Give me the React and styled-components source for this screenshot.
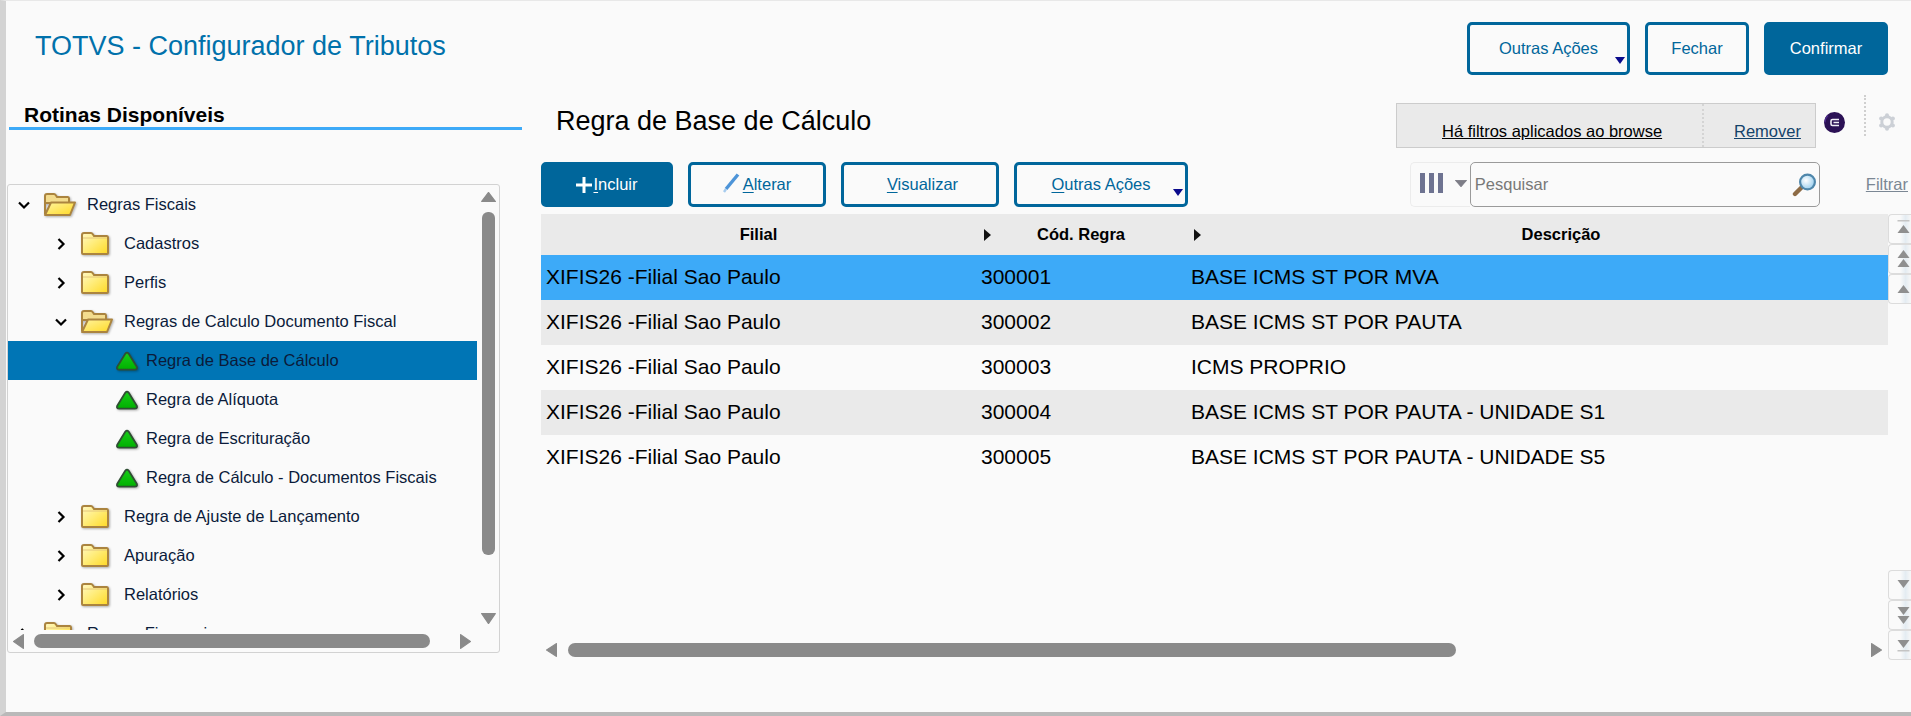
import React from 'react';
import styled, { createGlobalStyle } from 'styled-components';

const BLUE = '#00669b';

const GlobalStyle = createGlobalStyle`
    html, body {
        margin: 0;
        height: 100%;
        overflow: hidden;
        background: #fafafa;
    }
    * {
        box-sizing: border-box;
    }
`;

const Shell = styled.div`
    width: 1911px;
    height: 716px;
    overflow: hidden;
    background: #fafafa;
    border-left: 6px solid #d3d3d3;
    border-top: 1px solid #e8e8e8;
    border-bottom: 4px solid #b9b9b9;
    font-family: "Liberation Sans", Arial, sans-serif;
    font-size: 16.5px;
`;

const Header = styled.header`
    display: flex;
    justify-content: space-between;
    height: 89px;
    padding: 21px 23px 0 29px;
`;

const AppTitle = styled.h1`
    margin: 0;
    padding-top: 1px;
    font-size: 27px;
    font-weight: 400;
    line-height: 46px;
    color: #0071ab;
`;

const ButtonRow = styled.div`
    display: flex;
    gap: 15px;
`;

const Button = styled.button`
    position: relative;
    width: ${(p) => p.$w}px;
    height: ${(p) => p.$h || 45}px;
    padding: 0 0 0 ${(p) => p.$shift || 0}px;
    border: 3px solid ${BLUE};
    border-radius: 5px;
    background: ${(p) => (p.$primary ? BLUE : '#fafafa')};
    color: ${(p) => (p.$primary ? '#fff' : BLUE)};
    font: inherit;
    display: flex;
    align-items: center;
    justify-content: center;
    u {
        text-underline-offset: 2px;
    }
`;

const Caret = styled.span`
    position: absolute;
    right: 2px;
    bottom: 8px;
    width: 0;
    height: 0;
    border-left: 5px solid transparent;
    border-right: 5px solid transparent;
    border-top: 7px solid #0a0a8c;
`;

const Body = styled.div`
    display: grid;
    grid-template-columns: 535px 1370px;
`;

const Sidebar = styled.aside`
    display: flex;
    flex-direction: column;
`;

const SideTitle = styled.h2`
    box-sizing: content-box;
    margin: 13px 0 0 3px;
    width: 498px;
    height: 24px;
    padding-left: 15px;
    border-bottom: 3px solid #3daaf8;
    font-size: 21px;
    line-height: 24px;
    font-weight: 700;
    color: #000;
`;

const TreePanel = styled.div`
    display: grid;
    grid-template-columns: 469px 22px;
    grid-template-rows: 445px 22px;
    margin: 54px 0 0 1px;
    width: 493px;
    height: 469px;
    border: 1px solid #d2d2d2;
    border-radius: 3px;
`;

const TreeList = styled.ul`
    margin: 0;
    padding: 0;
    list-style: none;
    overflow: hidden;
`;

const TreeRow = styled.li`
    display: flex;
    align-items: center;
    height: 39px;
    padding-left: ${(p) => p.$indent}px;
    background: ${(p) => (p.$selected ? '#0075b5' : 'transparent')};
    color: #0b1b3a;
`;

const ChevronSlot = styled.span`
    display: flex;
    align-items: center;
    justify-content: center;
    width: 32px;
    margin-right: 4px;
`;

const IconSlot = styled.span`
    display: flex;
    align-items: center;
    width: ${(p) => p.$w}px;
    margin-right: ${(p) => p.$gap}px;
    filter: drop-shadow(1px 1px 1px rgba(0, 0, 0, 0.3));
`;

const VScroll = styled.div`
    display: flex;
    flex-direction: column;
    align-items: center;
    padding: 7px 0 6px;
    height: 445px;
`;

const VThumb = styled.div`
    width: 13px;
    height: 343px;
    margin: 10px 0 auto;
    border-radius: 6px;
    background: #8a8a8a;
`;

const HBar = styled.div`
    grid-column: 1 / 3;
    display: flex;
    align-items: center;
    padding: ${(p) => p.$pad};
`;

const HThumb = styled.div`
    width: ${(p) => p.$w}px;
    height: 14px;
    margin: 0 auto 0 ${(p) => p.$gap}px;
    border-radius: 7px;
    background: #8a8a8a;
`;

const Main = styled.main`
    display: flex;
    flex-direction: column;
`;

const TitleRow = styled.div`
    display: flex;
    justify-content: space-between;
    height: 72px;
`;

const PageTitle = styled.h2`
    margin: 0;
    padding-left: 15px;
    font-size: 27px;
    font-weight: 400;
    line-height: 62px;
    color: #000;
`;

const TitleTools = styled.div`
    display: flex;
    align-items: flex-start;
    padding-right: 15px;
`;

const FilterBox = styled.div`
    display: flex;
    width: 420px;
    height: 45px;
    margin-top: 13px;
    background: #eaeaea;
    border: 1px solid #cccccc;
`;

const FilterText = styled.span`
    width: 307px;
    padding: 17px 0 0 45px;
    color: #000;
    line-height: 20px;
    text-decoration: underline;
    white-space: nowrap;
    border-right: 2px dotted #d4d4d4;
`;

const FilterAction = styled.span`
    padding: 17px 0 0 30px;
    color: #14436b;
    line-height: 20px;
    text-decoration: underline;
`;

const LogoWrap = styled.span`
    display: flex;
    margin: 9px 0 0 8px;
    padding-top: 13px;
`;

const DottedRule = styled.span`
    width: 2px;
    height: 41px;
    margin: 5px 0 0 19px;
    border-left: 2px dotted #cfcfcf;
`;

const GearWrap = styled.span`
    display: flex;
    margin: 23px 0 0 12px;
`;

const Toolbar = styled.div`
    display: flex;
    align-items: stretch;
    height: 45px;
    padding-right: 3px;
`;

const SearchGroup = styled.div`
    display: flex;
    align-items: center;
    margin-left: auto;
`;

const ColumnsButton = styled.div`
    display: flex;
    align-items: center;
    width: 60px;
    height: 45px;
    padding: 0 3px 3px 9px;
    gap: 12px;
    border: 1px solid #ececec;
    border-right: 0;
    border-radius: 5px 0 0 5px;
`;

const SearchBox = styled.div`
    display: flex;
    align-items: center;
    justify-content: space-between;
    width: 350px;
    height: 45px;
    padding: 0 2px 0 4px;
    border: 1px solid #9a9a9a;
    border-radius: 5px;
    color: #787878;
`;

const FilterLink = styled.span`
    margin-left: 46px;
    color: #7b8794;
    text-decoration: underline;
`;

const TableRow = styled.div`
    display: flex;
    gap: 0;
`;

const TableArea = styled.div`
    display: flex;
    flex-direction: column;
    width: 1347px;
    height: 446px;
    margin-top: 7px;
    overflow: hidden;
`;

const GridRow = styled.div`
    display: grid;
    grid-template-columns: 435px 210px 750px;
    align-items: center;
    height: ${(p) => (p.$head ? 41 : 45)}px;
    background: ${(p) => (p.$selected ? '#3daaf8' : p.$shade ? '#eaeaea' : 'transparent')};
    color: #000;
`;

const HeadCell = styled.div`
    position: relative;
    font-weight: 700;
    text-align: center;
    padding-bottom: 1px;
    &::before {
        content: ${(p) => (p.$sort ? '""' : 'none')};
        position: absolute;
        left: 8px;
        top: 4px;
        border-top: 6px solid transparent;
        border-bottom: 6px solid transparent;
        border-left: 7px solid #111;
    }
`;

const Cell = styled.div`
    padding: 0 0 2px 5px;
    font-size: 21px;
    white-space: nowrap;
`;

const TableScroll = styled(HBar)`
    margin-top: auto;
    padding-bottom: 3px;
`;

const SideButtons = styled.div`
    display: flex;
    flex-direction: column;
    justify-content: space-between;
    width: 23px;
    height: 446px;
    margin-top: 7px;
`;

const PagerGroup = styled.div`
    display: flex;
    flex-direction: column;
`;

const PagerButton = styled.div`
    display: flex;
    align-items: center;
    justify-content: center;
    width: 23px;
    height: 30px;
    padding-left: 7px;
    border: 1px solid #dcdcdc;
    border-right: 0;
    border-radius: 4px 0 0 4px;
    background: linear-gradient(90deg, #fafafa 50%, #e4ecf2 75%, #f7f7f7 100%);
`;

const Arrow = ({ dir, w = 11, h = 11, color = '#8a8a8a' }) => {
    const points = {
        up: '5.5,0.5 10.5,10.5 0.5,10.5',
        down: '0.5,0.5 10.5,0.5 5.5,10.5',
        left: '10.5,0.5 10.5,10.5 0.5,5.5',
        right: '0.5,0.5 10.5,5.5 0.5,10.5',
    };
    return (
        <svg
            width={w}
            height={h}
            viewBox="0 0 11 11"
            preserveAspectRatio="none"
            fill={color}
            style={{ display: 'block' }}
        >
            <polygon points={points[dir]} stroke={color} strokeLinejoin="round" strokeWidth="1" />
        </svg>
    );
};

const Chevron = ({ open }) => (
    <svg width="14" height="14" viewBox="0 0 14 14" fill="none" stroke="#000" strokeWidth="2.2">
        <path d={open ? 'M2 4.5 7 9.5 12 4.5' : 'M4.5 2 9.5 7 4.5 12'} />
    </svg>
);

const FolderClosed = () => (
    <svg width="28" height="23" viewBox="0 0 28 23">
        <defs>
            <linearGradient id="fc" x1="0" y1="0" x2="1" y2="1">
                <stop offset="0" stopColor="#fff8c4" />
                <stop offset="0.45" stopColor="#ffed7c" />
                <stop offset="1" stopColor="#ffd924" />
            </linearGradient>
        </defs>
        <path
            d="M1 21V3q0-2 2-2h7q1 0 2 1.5L13 4h13q1 0 1 1.5V21q0 1-1 1H2q-1 0-1-1Z"
            fill="url(#fc)"
            stroke="#ab843f"
            strokeWidth="2"
        />
        <path d="M2 6h24" stroke="#e4c67c" strokeWidth="1" />
    </svg>
);

const FolderOpen = () => (
    <svg width="32" height="23" viewBox="0 0 32 23">
        <defs>
            <linearGradient id="fo" x1="0" y1="0" x2="1" y2="1">
                <stop offset="0" stopColor="#fff4a0" />
                <stop offset="1" stopColor="#ffd924" />
            </linearGradient>
        </defs>
        <path
            d="M1 21V3q0-2 2-2h7q1 0 2 1.5L13 4h11q1 0 1 1.5V10H1Z"
            fill="#f3dc8e"
            stroke="#ab843f"
            strokeWidth="2"
        />
        <path d="M7 9.5h24L26 22H1Z" fill="url(#fo)" stroke="#ab843f" strokeWidth="2" strokeLinejoin="round" />
    </svg>
);

const GreenTriangle = () => (
    <svg width="22" height="20" viewBox="0 0 22 20">
        <defs>
            <linearGradient id="gt" x1="0" y1="0" x2="0" y2="1">
                <stop offset="0" stopColor="#18cc18" />
                <stop offset="1" stopColor="#00b000" />
            </linearGradient>
        </defs>
        <path
            d="M9.4 2.6Q11 0.6 12.6 2.6L20.6 15.4Q22 18.6 18.8 18.6H3.2Q0 18.6 1.4 15.4Z"
            fill="url(#gt)"
            stroke="#2f4f33"
            strokeWidth="1.8"
            strokeLinejoin="round"
        />
    </svg>
);

const PlusIcon = () => (
    <svg width="16" height="16" viewBox="0 0 16 16" fill="#fff" style={{ marginRight: 1 }}>
        <path d="M6.5 0h3v6.5H16v3H9.5V16h-3V9.5H0v-3h6.5Z" />
    </svg>
);

const PencilIcon = () => (
    <svg width="17" height="20" viewBox="0 0 17 20" fill="none" style={{ marginRight: 3, marginTop: -4 }}>
        <path d="M15 1.5 3 16" stroke="#4d94d8" strokeWidth="3.4" />
        <path d="M3 16 1 19" stroke="#a6cbee" strokeWidth="2.4" />
    </svg>
);

const LogoIcon = () => (
    <svg width="21" height="21" viewBox="0 0 21 21">
        <circle cx="10.5" cy="10.5" r="10.5" fill="#2b1155" />
        <path d="M1 10.5a9.5 9.5 0 0 1 3-7" fill="none" stroke="#4d2a8a" strokeWidth="1.2" />
        <path d="M15 7.5H8.5q-1.5 0-1.5 1.5v3q0 1.5 1.5 1.5H15M9.5 10.5H15" fill="none" stroke="#f0eef6" strokeWidth="1.6" />
    </svg>
);

const GearIcon = () => (
    <svg width="18" height="18" viewBox="0 0 18 18" fill="#ccd0d6">
        <circle cx="9" cy="9" r="5.2" fill="none" stroke="#ccd0d6" strokeWidth="3" />
        <circle cx="9" cy="2.2" r="2" />
        <circle cx="9" cy="15.8" r="2" />
        <circle cx="3.1" cy="5.6" r="2" />
        <circle cx="14.9" cy="5.6" r="2" />
        <circle cx="3.1" cy="12.4" r="2" />
        <circle cx="14.9" cy="12.4" r="2" />
    </svg>
);

const ColumnsIcon = () => (
    <svg width="23" height="20" viewBox="0 0 23 20" fill="#6e7391">
        <rect x="0" y="0" width="5" height="20" />
        <rect x="9" y="0" width="5" height="20" />
        <rect x="18" y="0" width="5" height="20" />
    </svg>
);

const SearchIcon = () => (
    <svg width="25" height="24" viewBox="0 0 25 24">
        <defs>
            <radialGradient id="lens" cx="0.4" cy="0.4" r="0.7">
                <stop offset="0" stopColor="#ffffff" />
                <stop offset="1" stopColor="#8cc8ec" />
            </radialGradient>
        </defs>
        <path d="M10 14 3 21" stroke="#8d6b45" strokeWidth="4.4" strokeLinecap="round" />
        <circle cx="15.5" cy="9" r="7.4" fill="url(#lens)" stroke="#4f87ab" strokeWidth="2.2" />
    </svg>
);

const PagerArrows = ({ dir, count, bar }) => (
    <svg width="13" height="20" viewBox="0 0 13 20" fill="#8f8f8f">
        {bar && dir === 'up' && <rect x="0.5" y="1" width="12" height="1.5" fill="#c4c4c4" />}
        {count === 1 && <polygon points={dir === 'up' ? '6.5,6 12.5,14 0.5,14' : '0.5,5 12.5,5 6.5,13'} />}
        {count === 2 && dir === 'up' && (
            <>
                <polygon points="6.5,1 12.5,9 0.5,9" />
                <polygon points="6.5,10 12.5,18 0.5,18" />
            </>
        )}
        {count === 2 && dir === 'down' && (
            <>
                <polygon points="0.5,2 12.5,2 6.5,10" />
                <polygon points="0.5,11 12.5,11 6.5,19" />
            </>
        )}
        {bar && dir === 'down' && <rect x="0.5" y="15" width="12" height="1.5" fill="#c4c4c4" />}
    </svg>
);

const TREE = [
    { label: 'Regras Fiscais', indent: 0, folder: 'open' },
    { label: 'Cadastros', indent: 37, folder: 'closed' },
    { label: 'Perfis', indent: 37, folder: 'closed' },
    { label: 'Regras de Calculo Documento Fiscal', indent: 37, folder: 'open' },
    { label: 'Regra de Base de Cálculo', indent: 108, selected: true },
    { label: 'Regra de Alíquota', indent: 108 },
    { label: 'Regra de Escrituração', indent: 108 },
    { label: 'Regra de Cálculo - Documentos Fiscais', indent: 108 },
    { label: 'Regra de Ajuste de Lançamento', indent: 37, folder: 'closed' },
    { label: 'Apuração', indent: 37, folder: 'closed' },
    { label: 'Relatórios', indent: 37, folder: 'closed' },
    { label: 'Regras Financeiras', indent: 0, folder: 'closed' },
];

const ROWS = [
    ['300001', 'BASE ICMS ST POR MVA'],
    ['300002', 'BASE ICMS ST POR PAUTA'],
    ['300003', 'ICMS PROPRIO'],
    ['300004', 'BASE ICMS ST POR PAUTA - UNIDADE S1'],
    ['300005', 'BASE ICMS ST POR PAUTA - UNIDADE S5'],
];

const TreeItem = ({ item }) => {
    if (!item.folder) {
        return (
            <TreeRow $indent={item.indent} $selected={item.selected}>
                <IconSlot $w={22} $gap={8}>
                    <GreenTriangle />
                </IconSlot>
                {item.label}
            </TreeRow>
        );
    }
    return (
        <TreeRow $indent={item.indent}>
            <ChevronSlot>
                <Chevron open={item.folder === 'open'} />
            </ChevronSlot>
            <IconSlot $w={32} $gap={11}>
                {item.folder === 'open' ? <FolderOpen /> : <FolderClosed />}
            </IconSlot>
            {item.label}
        </TreeRow>
    );
};

class App extends React.Component {
    render() {
        return (
            <Shell>
                <GlobalStyle />
                <Header>
                    <AppTitle>TOTVS - Configurador de Tributos</AppTitle>
                    <ButtonRow>
                        <Button $w={163} $h={53}>
                            Outras Ações
                            <Caret />
                        </Button>
                        <Button $w={104} $h={53}>Fechar</Button>
                        <Button $w={124} $h={53} $primary>Confirmar</Button>
                    </ButtonRow>
                </Header>
                <Body>
                    <Sidebar>
                        <SideTitle>Rotinas Disponíveis</SideTitle>
                        <TreePanel>
                            <TreeList>
                                {TREE.map((item) => (
                                    <TreeItem key={item.label} item={item} />
                                ))}
                            </TreeList>
                            <VScroll>
                                <Arrow dir="up" w={15} h={10} />
                                <VThumb />
                                <Arrow dir="down" w={15} h={11} />
                            </VScroll>
                            <HBar $pad="0 28px 0 5px">
                                <Arrow dir="left" w={11} h={15} />
                                <HThumb $w={396} $gap={10} />
                                <Arrow dir="right" w={11} h={15} />
                            </HBar>
                        </TreePanel>
                    </Sidebar>
                    <Main>
                        <TitleRow>
                            <PageTitle>Regra de Base de Cálculo</PageTitle>
                            <TitleTools>
                                <FilterBox>
                                    <FilterText>Há filtros aplicados ao browse</FilterText>
                                    <FilterAction>Remover</FilterAction>
                                </FilterBox>
                                <LogoWrap>
                                    <LogoIcon />
                                </LogoWrap>
                                <DottedRule />
                                <GearWrap>
                                    <GearIcon />
                                </GearWrap>
                            </TitleTools>
                        </TitleRow>
                        <Toolbar>
                            <ButtonRow>
                                <Button $w={132} $primary>
                                    <PlusIcon />
                                    <span><u>I</u>ncluir</span>
                                </Button>
                                <Button $w={138}>
                                    <PencilIcon />
                                    <span><u>A</u>lterar</span>
                                </Button>
                                <Button $w={158} $shift={5}>
                                    <span><u>V</u>isualizar</span>
                                </Button>
                                <Button $w={174}>
                                    <span><u>O</u>utras Ações</span>
                                    <Caret />
                                </Button>
                            </ButtonRow>
                            <SearchGroup>
                                <ColumnsButton>
                                    <ColumnsIcon />
                                    <Arrow dir="down" w={12} h={7} color="#7d7d87" />
                                </ColumnsButton>
                                <SearchBox>
                                    Pesquisar
                                    <SearchIcon />
                                </SearchBox>
                                <FilterLink>Filtrar</FilterLink>
                            </SearchGroup>
                        </Toolbar>
                        <TableRow>
                            <TableArea>
                                <GridRow $head $shade>
                                    <HeadCell>Filial</HeadCell>
                                    <HeadCell $sort>Cód. Regra</HeadCell>
                                    <HeadCell $sort>Descrição</HeadCell>
                                </GridRow>
                                {ROWS.map((row, i) => (
                                    <GridRow key={row[0]} $selected={i === 0} $shade={i === 1 || i === 3}>
                                        <Cell>XIFIS26 -Filial Sao Paulo</Cell>
                                        <Cell>{row[0]}</Cell>
                                        <Cell>{row[1]}</Cell>
                                    </GridRow>
                                ))}
                                <TableScroll $pad="0 6px 3px 5px">
                                    <Arrow dir="left" w={11} h={14} />
                                    <HThumb $w={888} $gap={11} />
                                    <Arrow dir="right" w={11} h={14} />
                                </TableScroll>
                            </TableArea>
                            <SideButtons>
                                <PagerGroup>
                                    <PagerButton><PagerArrows dir="up" count={1} bar /></PagerButton>
                                    <PagerButton><PagerArrows dir="up" count={2} /></PagerButton>
                                    <PagerButton><PagerArrows dir="up" count={1} /></PagerButton>
                                </PagerGroup>
                                <PagerGroup>
                                    <PagerButton><PagerArrows dir="down" count={1} /></PagerButton>
                                    <PagerButton><PagerArrows dir="down" count={2} /></PagerButton>
                                    <PagerButton><PagerArrows dir="down" count={1} bar /></PagerButton>
                                </PagerGroup>
                            </SideButtons>
                        </TableRow>
                    </Main>
                </Body>
            </Shell>
        );
    }
}

export default App;
